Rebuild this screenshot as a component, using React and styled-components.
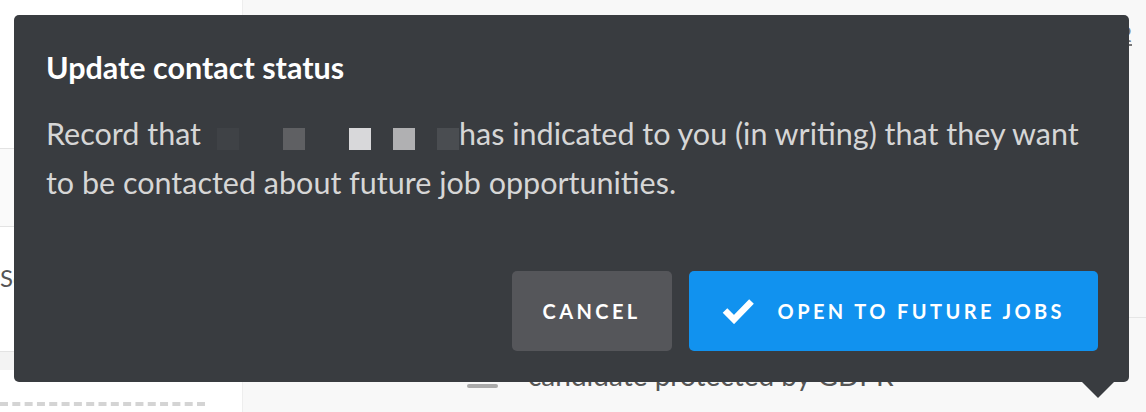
import React from 'react';
import styled, { createGlobalStyle } from 'styled-components';

const GlobalStyle = createGlobalStyle`
  html, body {
    margin: 0;
    padding: 0;
    height: 412px;
    overflow: hidden;
    background: #f8f8f8;
    font-family: Lato, "Open Sans", sans-serif;
  }
`;

const Page = styled.div`
  position: relative;
  display: flex;
  width: 1146px;
  height: 412px;
  overflow: hidden;
`;

const Sidebar = styled.aside`
  width: 242px;
  display: flex;
  flex-direction: column;
  background: #fff;
`;

const SideRow = styled.div`
  height: ${(p) => p.h}px;
  box-sizing: border-box;
  border-bottom: 1px solid #e3e3e3;
  background: ${(p) => (p.shade ? '#fafafa' : '#fff')};
  padding-top: ${(p) => p.top || 0}px;
  font-size: 24px;
  line-height: 30px;
  color: #555;
`;

const SideGap = styled.div`
  height: 18px;
  background: #f3f3f3;
`;

const Dashed = styled.div`
  margin-top: 32px;
  width: 205px;
  border-top: 4px dashed #d4d4d4;
`;

const Main = styled.main`
  flex: 1;
  display: flex;
  flex-direction: column;
  align-items: flex-end;
  background: #f8f8f8;
  border-left: 1px solid #eee;
`;

const PageLink = styled.span`
  margin-top: 20px;
  margin-right: 14px;
  font-size: 22px;
  color: #777;
  text-decoration: underline;
`;

const Divider = styled.div`
  margin-top: 270px;
  width: 100%;
  border-top: 1px solid #e6e6e6;
`;

const Protected = styled.div`
  align-self: flex-start;
  display: flex;
  align-items: center;
  gap: 30px;
  margin-top: 40px;
  margin-left: 224px;
  font-size: 28px;
  color: #555;
`;

const Pill = styled.span`
  width: 31px;
  height: 4px;
  border-radius: 2px;
  background: #aaa;
  margin-top: 22px;
`;

const Dialog = styled.section`
  position: absolute;
  left: 14px;
  top: 15px;
  width: 1115px;
  height: 367px;
  box-sizing: border-box;
  padding: 32px 31px 31px 32px;
  background: #393c40;
  border-radius: 5px;
  display: flex;
  flex-direction: column;
`;

const Arrow = styled.div`
  position: absolute;
  right: 15px;
  bottom: -16px;
  width: 0;
  height: 0;
  border-left: 16px solid transparent;
  border-right: 16px solid transparent;
  border-top: 16px solid #393c40;
`;

const Title = styled.h2`
  margin: 0;
  font-size: 30.5px;
  line-height: 40px;
  font-weight: 700;
  color: #fff;
`;

const Body = styled.p`
  margin: 22px 0 0;
  font-size: 30.5px;
  line-height: 49px;
  color: #d6d6d6;
`;

const Redacted = styled.span`
  display: inline-flex;
  vertical-align: -5px;
  margin-left: 16px;
`;

const Block = styled.span`
  display: inline-block;
  width: 22px;
  height: 22px;
  margin-left: ${(p) => p.gap}px;
  background: ${(p) => p.c};
`;

const Actions = styled.div`
  margin-top: auto;
  display: flex;
  justify-content: flex-end;
  gap: 17px;
`;

const Button = styled.button`
  height: 80px;
  padding: 0 ${(p) => (p.primary ? 33 : 31)}px;
  border: none;
  border-radius: 5px;
  background: ${(p) => (p.primary ? '#1192ef' : '#55565a')};
  color: #fff;
  font-family: inherit;
  font-size: 20px;
  font-weight: 700;
  letter-spacing: 3.4px;
  display: flex;
  align-items: center;
  gap: 24px;
  cursor: pointer;
`;

const Check = () => (
  <svg width="32" height="26" viewBox="0 0 32 26">
    <polyline
      points="3,12.5 12,21.5 29.5,3.5"
      fill="none"
      stroke="#fff"
      strokeWidth="6.5"
      strokeLinejoin="miter"
    />
  </svg>
);

export default function App() {
  return (
    <Page>
      <GlobalStyle />
      <Sidebar>
        <SideRow h={149} />
        <SideRow h={78} shade />
        <SideRow h={125} top={36}>
          Se
        </SideRow>
        <SideGap />
        <Dashed />
      </Sidebar>
      <Main>
        <PageLink>2</PageLink>
        <Divider />
        <Protected>
          <Pill />
          candidate protected by GDPR
        </Protected>
      </Main>
      <Dialog>
        <Title>Update contact status</Title>
        <Body>
          Record that
          <Redacted>
            <Block c="#3f4246" gap={0} />
            <Block c="#5f6063" gap={44} />
            <Block c="#d8d8da" gap={44} />
            <Block c="#b0b0b2" gap={22} />
            <Block c="#4a4d51" gap={22} />
          </Redacted>
          has indicated to you (in writing) that they want to be contacted
          about future job opportunities.
        </Body>
        <Actions>
          <Button>CANCEL</Button>
          <Button primary>
            <Check />
            OPEN TO FUTURE JOBS
          </Button>
        </Actions>
        <Arrow />
      </Dialog>
    </Page>
  );
}
